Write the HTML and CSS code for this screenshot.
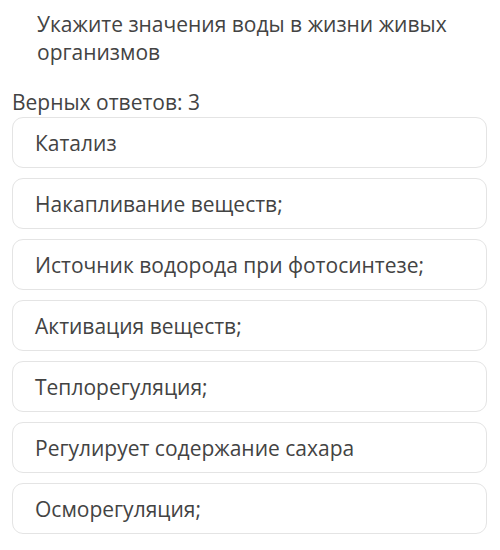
FILE: index.html
```html
<!DOCTYPE html>
<html lang="ru">
<head>
  <meta charset="UTF-8" />
  <title>Вопрос</title>
  <link rel="stylesheet" href="styles.css">
</head>
<body>
  <div class="question">
    <p class="question-text">Укажите значения воды в жизни живых организмов</p>
    <div class="answers-count">Верных ответов: 3</div>
    <div class="answer-list">
      <div class="answer">Катализ</div>
      <div class="answer">Накапливание веществ;</div>
      <div class="answer">Источник водорода при фотосинтезе;</div>
      <div class="answer">Активация веществ;</div>
      <div class="answer">Теплорегуляция;</div>
      <div class="answer">Регулирует содержание сахара</div>
      <div class="answer">Осморегуляция;</div>
    </div>
  </div>
</body>
</html>
```

FILE: styles.css
```css
body {
  margin: 0;
  background: #fff;
  font-family: 'Open Sans', sans-serif;
  color: #434343;
}

.question {
  padding: 10px 13px 0 12px;
}

.question-text {
  margin: 0 0 0 25px;
  font-size: 21px;
  line-height: 28px;
  width: 430px;
}

.answers-count {
  margin-top: 24px;
  font-size: 21px;
  line-height: 24px;
}

.answer-list {
  display: flex;
  flex-direction: column;
  gap: 10px;
  margin-top: 3px;
}

.answer {
  height: 51px;
  box-sizing: border-box;
  display: flex;
  align-items: center;
  padding: 0 22px;
  border: 1.5px solid #e4e4e4;
  border-radius: 11px;
  font-size: 21px;
}
```
